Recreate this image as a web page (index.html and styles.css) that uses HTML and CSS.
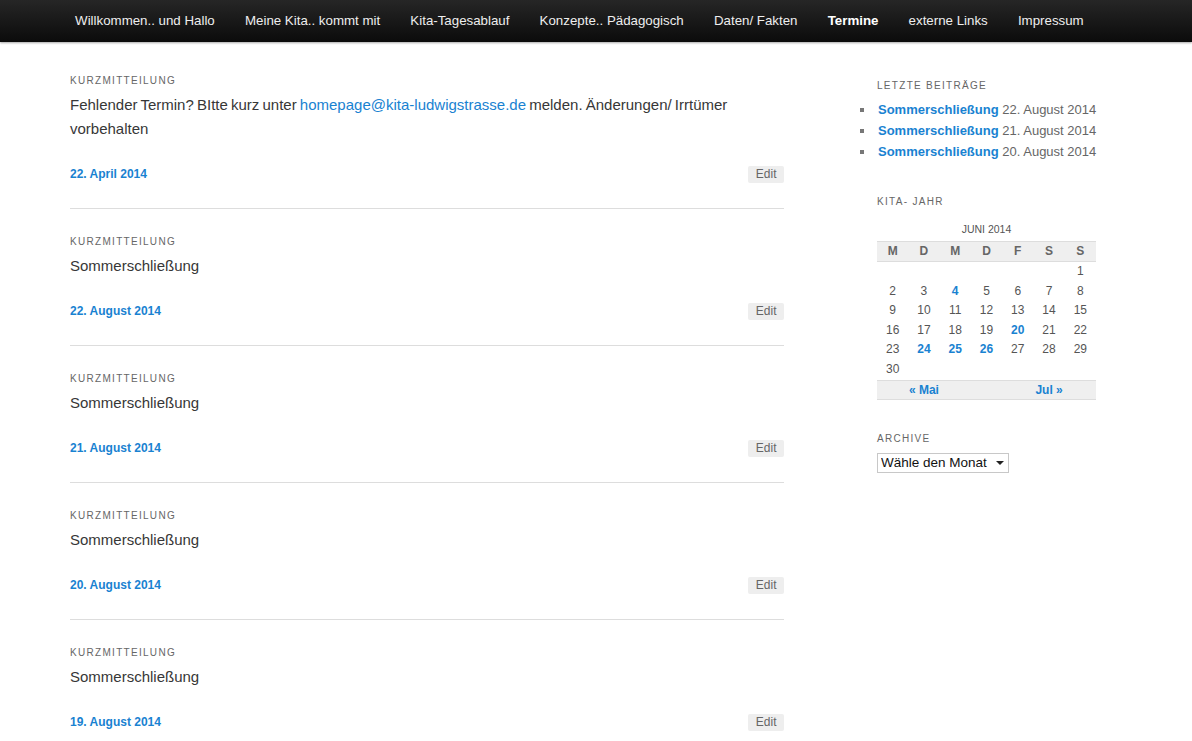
FILE: index.html
```html
<!DOCTYPE html>
<html lang="de">
<head>
<meta charset="utf-8">
<title>Termine</title>
<link rel="stylesheet" href="styles.css">
</head>
<body>
<nav class="topnav">
  <ul class="menu">
    <li><a href="#">Willkommen.. und Hallo</a></li>
    <li><a href="#">Meine Kita.. kommt mit</a></li>
    <li><a href="#">Kita-Tagesablauf</a></li>
    <li><a href="#">Konzepte.. Pädagogisch</a></li>
    <li><a href="#">Daten/ Fakten</a></li>
    <li class="current"><a href="#">Termine</a></li>
    <li><a href="#">externe Links</a></li>
    <li><a href="#">Impressum</a></li>
  </ul>
</nav>
<div class="page">
  <main class="content">
    <article class="post">
      <div class="post-format">Kurzmitteilung</div>
      <div class="post-text"><span>Fehlender Termin? BItte kurz unter</span> <a href="#">homepage@kita-ludwigstrasse.de</a> <span>melden. Änderungen/ Irrtümer</span> <span>vorbehalten</span></div>
      <footer class="post-meta"><a class="post-date" href="#">22. April 2014</a><a class="edit" href="#">Edit</a></footer>
    </article>
    <article class="post">
      <div class="post-format">Kurzmitteilung</div>
      <div class="post-text">Sommerschließung</div>
      <footer class="post-meta"><a class="post-date" href="#">22. August 2014</a><a class="edit" href="#">Edit</a></footer>
    </article>
    <article class="post">
      <div class="post-format">Kurzmitteilung</div>
      <div class="post-text">Sommerschließung</div>
      <footer class="post-meta"><a class="post-date" href="#">21. August 2014</a><a class="edit" href="#">Edit</a></footer>
    </article>
    <article class="post">
      <div class="post-format">Kurzmitteilung</div>
      <div class="post-text">Sommerschließung</div>
      <footer class="post-meta"><a class="post-date" href="#">20. August 2014</a><a class="edit" href="#">Edit</a></footer>
    </article>
    <article class="post">
      <div class="post-format">Kurzmitteilung</div>
      <div class="post-text">Sommerschließung</div>
      <footer class="post-meta"><a class="post-date" href="#">19. August 2014</a><a class="edit" href="#">Edit</a></footer>
    </article>
  </main>
  <aside class="sidebar">
    <section class="widget">
      <h3 class="widget-title">Letzte Beiträge</h3>
      <ul class="recent">
        <li><a href="#">Sommerschließung</a> <span class="date">22. August 2014</span></li>
        <li><a href="#">Sommerschließung</a> <span class="date">21. August 2014</span></li>
        <li><a href="#">Sommerschließung</a> <span class="date">20. August 2014</span></li>
      </ul>
    </section>
    <section class="widget">
      <h3 class="widget-title">Kita- Jahr</h3>
      <table class="calendar">
        <caption>JUNI 2014</caption>
        <thead>
          <tr><th>M</th><th>D</th><th>M</th><th>D</th><th>F</th><th>S</th><th>S</th></tr>
        </thead>
        <tbody>
          <tr><td colspan="6"></td><td>1</td></tr>
          <tr><td>2</td><td>3</td><td><a href="#">4</a></td><td>5</td><td>6</td><td>7</td><td>8</td></tr>
          <tr><td>9</td><td>10</td><td>11</td><td>12</td><td>13</td><td>14</td><td>15</td></tr>
          <tr><td>16</td><td>17</td><td>18</td><td>19</td><td><a href="#">20</a></td><td>21</td><td>22</td></tr>
          <tr><td>23</td><td><a href="#">24</a></td><td><a href="#">25</a></td><td><a href="#">26</a></td><td>27</td><td>28</td><td>29</td></tr>
          <tr><td>30</td><td colspan="6"></td></tr>
        </tbody>
        <tfoot>
          <tr><td colspan="3"><a href="#">« Mai</a></td><td></td><td colspan="3"><a href="#">Jul »</a></td></tr>
        </tfoot>
      </table>
    </section>
    <section class="widget">
      <h3 class="widget-title">Archive</h3>
      <div class="select-wrap">
        <select class="archive-select">
          <option>Wähle den Monat</option>
        </select>
      </div>
    </section>
  </aside>
</div>
</body>
</html>
```
FILE: styles.css
```css
* { box-sizing: border-box; }
html, body { margin: 0; padding: 0; }
body {
  background: #fff;
  font-family: "Liberation Sans", Arial, sans-serif;
  color: #373737;
}
a { text-decoration: none; color: #1982d1; }

.topnav {
  height: 42px;
  background: linear-gradient(to bottom, #262626 0%, #0b0b0b 100%);
  box-shadow: 0 1px 2px rgba(0,0,0,0.35);
  position: relative;
  z-index: 1;
}
.menu {
  list-style: none;
  margin: 0;
  padding: 0 0 0 60px;
  display: flex;
  height: 42px;
  align-items: center;
}
.menu li a {
  display: block;
  padding: 0 15.1px;
  font-size: 13.3px;
  line-height: 42px;
  color: #eee;
}
.menu li.current a { font-weight: bold; color: #fff; }

.page {
  display: flex;
  padding: 6px 0 0 70px;
}
.content {
  width: 714px;
  flex: none;
}
.post {
  padding: 25px 0 25px;
  border-bottom: 1px solid #ddd;
}
.post-format {
  font-size: 10px;
  line-height: 16px;
  letter-spacing: 0.13em;
  text-transform: uppercase;
  color: #666;
  margin-bottom: 4px;
}
.post-text {
  font-size: 15px;
  line-height: 24px;
  color: #373737;
  margin-bottom: 24px;
  word-spacing: -1px;
}
.post-meta {
  display: flex;
  justify-content: space-between;
  align-items: center;
  height: 18px;
}
.post-date {
  font-size: 12px;
  font-weight: bold;
  line-height: 18px;
  color: #1982d1;
}
.edit {
  background: #eee;
  color: #666;
  font-size: 12px;
  line-height: 17px;
  padding: 0 7.5px;
  border-radius: 2px;
}

.sidebar {
  width: 219px;
  margin-left: 93px;
  flex: none;
  padding-top: 30px;
}
.widget { margin-bottom: 32px; }
.widget:nth-child(2) { margin-bottom: 31px; }
.widget-title {
  margin: 0;
  font-size: 10px;
  font-weight: normal;
  line-height: 16px;
  letter-spacing: 0.13em;
  text-transform: uppercase;
  color: #666;
}
.recent {
  list-style: square inside;
  color: #777;
  margin: 5px 0 0 -17px;
  padding: 0;
}
.recent li {
  font-size: 13px;
  line-height: 21px;
  height: 21px;
  white-space: nowrap;
}
.recent a { font-weight: bold; color: #1982d1; }
.recent .date { color: #666; }

.calendar {
  width: 100%;
  border-collapse: collapse;
  margin-top: 11px;
  font-size: 12px;
  color: #555;
}
.calendar caption {
  font-size: 10.5px;
  color: #555;
  line-height: 16px;
  padding-bottom: 4px;
  text-align: center;
}
.calendar thead th {
  background: #efefef;
  border-top: 1px solid #ddd;
  border-bottom: 1px solid #ddd;
  font-weight: bold;
  color: #666;
  line-height: 19px;
  padding: 0;
  text-align: center;
  width: 14.28%;
}
.calendar tbody td {
  text-align: center;
  line-height: 19.6px;
  padding: 0;
}
.calendar tbody a { font-weight: bold; color: #1982d1; }
.calendar tfoot td {
  background: #efefef;
  border-top: 1px solid #ddd;
  border-bottom: 1px solid #ddd;
  text-align: center;
  line-height: 18px;
  padding: 0;
}
.calendar tfoot a { font-weight: bold; color: #1982d1; }

.select-wrap {
  display: block;
  width: 132px;
  height: 20px;
  position: relative;
  margin-top: 6px;
}
.archive-select {
  display: block;
  appearance: none;
  -webkit-appearance: none;
  width: 132px;
  height: 20px;
  border: 1px solid #c8c8c8;
  border-radius: 0;
  background: #fff;
  font-family: "Liberation Sans", Arial, sans-serif;
  font-size: 13.5px;
  color: #111;
  padding: 0 0 0 3px;
  margin: 0;
  line-height: 18px;
}
.select-wrap::after {
  content: "";
  position: absolute;
  right: 5px;
  top: 8px;
  border-left: 4px solid transparent;
  border-right: 4px solid transparent;
  border-top: 4px solid #222;
  pointer-events: none;
}
```
